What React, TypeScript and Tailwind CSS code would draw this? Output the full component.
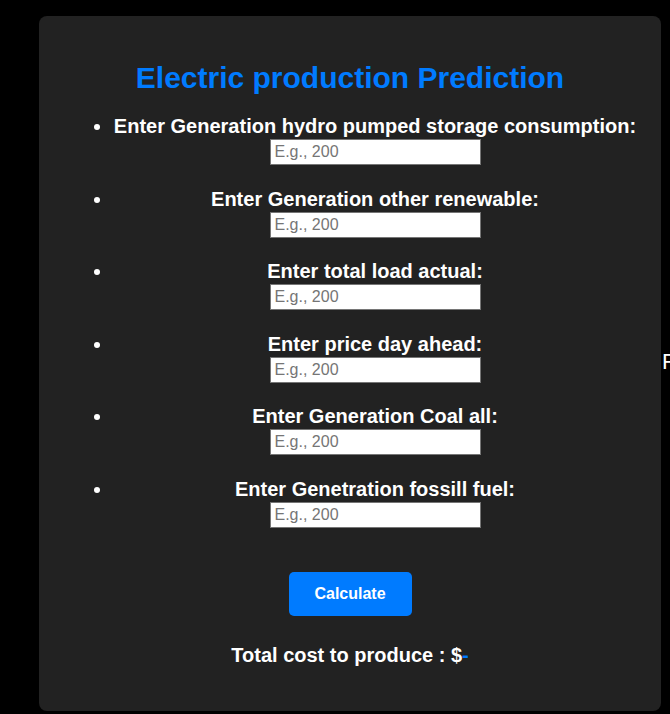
import { useState } from 'react'

const fields = [
  'Enter Generation hydro pumped storage consumption:',
  'Enter Generation other renewable:',
  'Enter total load actual:',
  'Enter price day ahead:',
  'Enter Generation Coal all:',
  'Enter Genetration fossill fuel:',
]

export default function App() {
  const [values, setValues] = useState<string[]>(fields.map(() => ''))

  return (
    <div
      className="relative min-h-[714px] bg-black overflow-hidden"
      style={{ fontFamily: '"Liberation Sans", Arial, sans-serif' }}
    >
      <div className="pl-[39px] pt-[16px]">
        <div className="w-[622px] h-[695px] bg-[#222222] rounded-lg pt-[45px]">
          <h1 className="text-[30px] leading-[34px] font-bold text-[#007bff] text-center">
            Electric production Prediction
          </h1>
          <ul className="list-disc text-white ml-[74px] w-[524px] mt-[20px]">
            {fields.map((f, i) => (
              <li key={f} className="text-center mb-[22.5px] text-[20px] leading-[22px]">
                <label className="block font-bold mb-[2px]">{f}</label>
                <input
                  value={values[i]}
                  onChange={(e) => setValues(values.map((v, j) => (j === i ? e.target.value : v)))}
                  placeholder="E.g., 200"
                  className="block mx-auto w-[211px] h-[26px] bg-white border border-[#767676] px-[4px] text-[16px] leading-[20px] text-black placeholder:text-[#757575] outline-none"
                />
              </li>
            ))}
          </ul>
          <div className="flex justify-center mt-[44px]">
            <button className="w-[123px] h-[44px] bg-[#007bff] text-white text-[16px] font-bold rounded-[5px]">
              Calculate
            </button>
          </div>
          <p className="text-center text-white text-[20px] leading-[23px] font-bold mt-[28px]">
            Total cost to produce : $<span className="text-[#007bff]">-</span>
          </p>
        </div>
      </div>
      <span className="absolute left-[662px] top-[349px] text-white text-[22px] leading-[25px]">F</span>
    </div>
  )
}
